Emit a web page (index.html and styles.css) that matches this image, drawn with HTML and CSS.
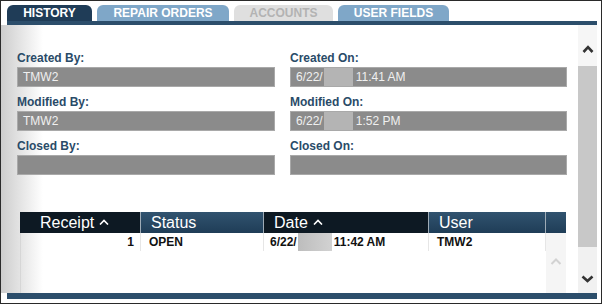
FILE: index.html
```html
<!DOCTYPE html>
<html lang="en">
<head>
    <meta charset="UTF-8">
    <meta name="viewport" content="width=device-width, initial-scale=1.0">
    <title>History</title>
    <link rel="stylesheet" href="styles.css">
</head>
<body>
    <div class="frame">
        <div class="tabs">
            <div class="tab active">HISTORY</div>
            <div class="tab">REPAIR ORDERS</div>
            <div class="tab disabled">ACCOUNTS</div>
            <div class="tab">USER FIELDS</div>
        </div>
        <div class="tab-bar"></div>

        <div class="panel">
            <div class="content">
                <div class="fields">
                    <div class="field">
                        <label>Created By:</label>
                        <div class="input">TMW2</div>
                    </div>
                    <div class="field">
                        <label>Created On:</label>
                        <div class="input">6/22/<span class="redact"></span>11:41 AM</div>
                    </div>
                    <div class="field">
                        <label>Modified By:</label>
                        <div class="input">TMW2</div>
                    </div>
                    <div class="field">
                        <label>Modified On:</label>
                        <div class="input">6/22/<span class="redact"></span>1:52 PM</div>
                    </div>
                    <div class="field">
                        <label>Closed By:</label>
                        <div class="input"></div>
                    </div>
                    <div class="field">
                        <label>Closed On:</label>
                        <div class="input"></div>
                    </div>
                </div>

                <div class="grid">
                    <div class="grid-head">
                        <div class="head-cell sorted receipt">Receipt
                            <svg class="caret" width="10" height="6" viewBox="0 0 10 6"><polyline points="1,5.5 5,1.5 9,5.5" fill="none" stroke="#fff" stroke-width="1.6"/></svg>
                        </div>
                        <div class="head-cell">Status</div>
                        <div class="head-cell sorted">Date
                            <svg class="caret" width="10" height="6" viewBox="0 0 10 6"><polyline points="1,5.5 5,1.5 9,5.5" fill="none" stroke="#fff" stroke-width="1.6"/></svg>
                        </div>
                        <div class="head-cell">User</div>
                        <div class="head-cell last"></div>
                    </div>
                    <div class="grid-body">
                        <div class="grid-rows">
                            <div class="row">
                                <div class="cell num">1</div>
                                <div class="cell">OPEN</div>
                                <div class="cell date">6/22/<span class="redact-row"></span>11:42 AM</div>
                                <div class="cell">TMW2</div>
                            </div>
                        </div>
                        <div class="inner-scroll">
                            <svg width="12" height="8" viewBox="0 0 12 8"><polyline points="1.5,7 6,2.5 10.5,7" fill="none" stroke="#d2d2d2" stroke-width="2"/></svg>
                        </div>
                    </div>
                </div>
            </div>

            <div class="scrollbar">
                <div class="sb-up">
                    <svg width="12" height="8" viewBox="0 0 12 8"><polyline points="1.5,7 6,2.2 10.5,7" fill="none" stroke="#333" stroke-width="2.6"/></svg>
                </div>
                <div class="sb-thumb"></div>
                <div class="sb-down">
                    <svg width="13" height="8" viewBox="0 0 13 8"><polyline points="1.5,1.5 6.5,6 11.5,1.5" fill="none" stroke="#333" stroke-width="2.6"/></svg>
                </div>
            </div>
        </div>
        <div class="bottom-bar"></div>
    </div>
</body>
</html>
```

FILE: styles.css
```css
body {
    margin: 0;
    font-family: "Liberation Sans", Arial, sans-serif;
}
.frame {
    width: 602px;
    height: 304px;
    box-sizing: border-box;
    border: 1px solid #2a2a2a;
    padding: 4px 4px 4px 6px;
    background: linear-gradient(to right, #cdcdcd, #ffffff 42px) 0 24px / 100% 268px no-repeat, #fff;
}

/* tabs */
.tabs {
    display: flex;
    gap: 5px;
    height: 16px;
}
.tab {
    height: 16px;
    line-height: 16px;
    font-size: 12px;
    font-weight: bold;
    color: #fff;
    text-align: center;
    background-color: #7fa7c8;
    border-radius: 6px 6px 0 0;
}
.tab:nth-child(1) { width: 85px; }
.tab:nth-child(2) { width: 132px; }
.tab:nth-child(3) { width: 99px; }
.tab:nth-child(4) { width: 111px; }
.tab.active {
    background-color: #1f3c57;
}
.tab.disabled {
    background-color: #dfdfdf;
    color: #b3b3b3;
}
.tab-bar {
    height: 4px;
    background-color: #2c4e6b;
}
.bottom-bar {
    height: 6px;
    background-color: #2c4e6b;
}

/* panel */
.panel {
    display: flex;
    height: 268px;
}
.content {
    flex: 1;
    padding: 28px 0 0 10px;
}
.fields {
    display: grid;
    grid-template-columns: 258px 277px;
    column-gap: 15px;
    row-gap: 10px;
}
.field label {
    display: block;
    height: 14px;
    line-height: 11px;
    font-size: 12px;
    font-weight: bold;
    color: #2a4b68;
}
.input {
    display: flex;
    height: 20px;
    box-sizing: border-box;
    border: 1px solid #a9a9a9;
    background-color: #8b8b8b;
    padding: 0 5px;
    line-height: 18px;
    font-size: 12px;
    color: #f0f0f0;
}
.redact {
    width: 29px;
    margin: 0 3px 0 1px;
    background-color: #b4b4b4;
}

/* receipts grid */
.grid {
    margin: 37px 0 0 3px;
    width: 546px;
    height: 81px;
    display: flex;
    flex-direction: column;
}
.grid-head {
    display: grid;
    grid-template-columns: 121px 123px 165px 117px 20px;
    height: 21px;
}
.head-cell {
    display: flex;
    align-items: center;
    gap: 5px;
    padding-left: 10px;
    border-right: 1px solid #9eabb6;
    background: linear-gradient(#31536f, #1f3d57);
    color: #fff;
    font-size: 16px;
    line-height: 21px;
}
.head-cell.sorted {
    background: #0d1923;
}
.head-cell.receipt {
    padding-left: 20px;
}
.head-cell.last {
    border-right: none;
}
.caret {
    margin-top: -2px;
}
.grid-body {
    flex: 1;
    display: flex;
    border-left: 1px solid #d6d6d6;
}
.grid-rows {
    flex: 1;
}
.row {
    display: grid;
    grid-template-columns: 120px 123px 165px 117px;
    height: 18px;
}
.cell {
    display: flex;
    padding-left: 8px;
    border-right: 1px solid #e6e6e6;
    font-size: 12px;
    font-weight: bold;
    line-height: 18px;
    color: #111;
}
.cell.num {
    justify-content: flex-end;
    padding: 0 6px 0 0;
}
.cell.date {
    padding-left: 6px;
}
.redact-row {
    width: 34px;
    margin: 0 2px 0 1px;
    background: linear-gradient(to right, #bdbdbd, #d2d2d2);
}
.inner-scroll {
    width: 20px;
    background-color: #f5f5f5;
    display: flex;
    justify-content: center;
    padding-top: 24px;
    box-sizing: border-box;
}

/* page scrollbar */
.scrollbar {
    width: 19px;
    display: flex;
    flex-direction: column;
    background-color: #f1f1f1;
}
.sb-up {
    height: 41px;
    box-sizing: border-box;
    padding-top: 20px;
    display: flex;
    justify-content: center;
    background-color: #f6f6f6;
}
.sb-thumb {
    height: 181px;
    background-color: #c8c8c8;
}
.sb-down {
    flex: 1;
    box-sizing: border-box;
    padding-top: 28px;
    display: flex;
    justify-content: center;
}
```
